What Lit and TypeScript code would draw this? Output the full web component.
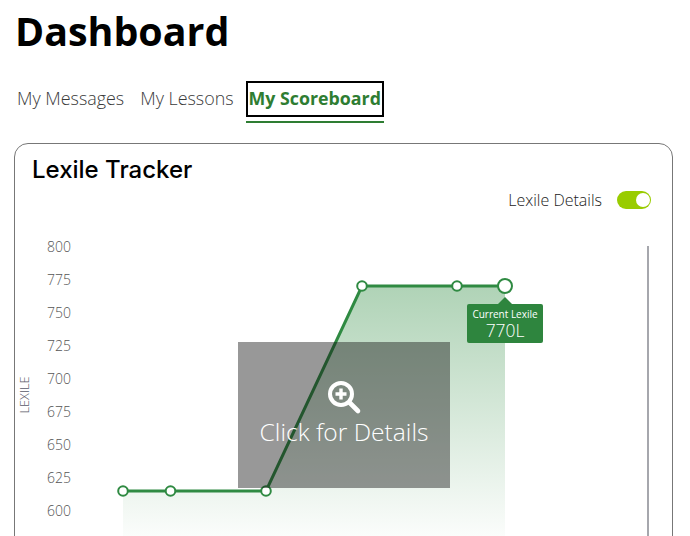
import { LitElement, html, css, svg } from "lit";
import { customElement } from "lit/decorators.js";

const LABELS = [800, 775, 750, 725, 700, 675, 650, 625, 600];
const POINTS: [number, number][] = [[123, 491], [170.5, 491], [266, 491], [362, 286], [457, 286]];

@customElement("app-root")
export class AppRoot extends LitElement {
  static styles = css`
    :host {
      display: block;
      height: 536px;
      overflow: hidden;
      background: #fff;
      font-family: "Open Sans", sans-serif;
    }
    h1 {
      margin: 0;
      padding: 4px 0 0 15px;
      font-size: 39.4px;
      line-height: 54px;
      font-weight: 700;
      color: #000;
    }
    .tabs {
      display: flex;
      align-items: flex-start;
      gap: 16px;
      margin: 23px 0 0 17px;
      height: 42px;
    }
    .tab {
      font-size: 17.9px;
      font-weight: 300;
      line-height: 34px;
      color: #3a3a3a;
    }
    .tabs .active {
      margin-left: -4px;
      padding-bottom: 4px;
      border-bottom: 2px solid #2e7d32;
    }
    .focus {
      display: block;
      border: 2px solid #000;
      padding: 0 1px;
      height: 32px;
      line-height: 30px;
      font-weight: 700;
      font-size: 17.8px;
      color: #2e7d32;
    }
    .card {
      margin: 20px 17px 0 14px;
      border: 1px solid #777;
      border-radius: 14px;
      height: 500px;
      position: relative;
    }
    h2 {
      margin: 0;
      padding: 9px 0 0 17px;
      font-family: Inter, sans-serif;
      font-size: 24px;
      line-height: 34px;
      font-weight: 500;
      color: #000;
    }
    .details {
      display: flex;
      justify-content: flex-end;
      align-items: center;
      gap: 15px;
      padding-right: 21px;
      margin-top: 3px;
      height: 20px;
      font-size: 16px;
      font-weight: 300;
      color: #222;
    }
    .toggle {
      width: 34px;
      height: 18px;
      border-radius: 9px;
      background: #99cc00;
      display: flex;
      justify-content: flex-end;
      align-items: center;
      padding-right: 1.5px;
      box-sizing: border-box;
    }
    .knob {
      width: 14px;
      height: 14px;
      border-radius: 50%;
      background: #fff;
    }
    .chart {
      position: relative;
      margin-top: 26px;
      height: 320px;
    }
    .chart svg.plot {
      display: block;
      width: 657px;
      height: 320px;
    }
    .axis {
      font-family: "Open Sans", sans-serif;
      font-size: 14px;
      font-weight: 300;
      fill: #555;
    }
    .axis-title {
      font-family: "Open Sans", sans-serif;
      font-size: 12.6px;
      font-weight: 300;
      fill: #5a5a6a;
    }
    .tooltip {
      position: absolute;
      left: 452px;
      top: 68px;
      width: 76px;
      height: 39px;
      background: #2e853e;
      border-radius: 2px;
      color: #fff;
      text-align: center;
    }
    .tooltip::before {
      content: "";
      position: absolute;
      left: 31px;
      top: -7px;
      border: 7px solid transparent;
      border-top: 0;
      border-bottom-color: #2e853e;
    }
    .tooltip .cap {
      font-size: 10px;
      line-height: 12px;
      padding-top: 4px;
    }
    .tooltip .val {
      font-size: 17.4px;
      line-height: 20px;
      font-weight: 300;
    }
    .overlay {
      position: absolute;
      left: 223px;
      top: 106px;
      width: 212px;
      height: 146px;
      background: rgba(20, 20, 20, 0.44);
      color: #fff;
      display: flex;
      flex-direction: column;
      align-items: center;
    }
    .overlay svg {
      margin-top: 38px;
      display: block;
    }
    .overlay span {
      font-size: 24.6px;
      font-weight: 300;
      line-height: 32px;
    }
  `;

  render() {
    const line = [...POINTS, [505, 286]].map((p) => p.join(",")).join(" ");
    const area = `${line} 505,536 123,536`;
    return html`
      <h1>Dashboard</h1>
      <div class="tabs">
        <div class="tab">My Messages</div>
        <div class="tab">My Lessons</div>
        <div class="tab active"><span class="focus">My Scoreboard</span></div>
      </div>
      <div class="card">
        <h2>Lexile Tracker</h2>
        <div class="details">
          <span>Lexile Details</span>
          <div class="toggle"><div class="knob"></div></div>
        </div>
        <div class="chart">
          <svg class="plot" viewBox="15 236 657 320">
            <defs>
              <linearGradient id="fill" gradientUnits="userSpaceOnUse" x1="0" y1="286" x2="0" y2="536">
                <stop offset="0" stop-color="#2e8b40" stop-opacity="0.38"></stop>
                <stop offset="1" stop-color="#2e8b40" stop-opacity="0.02"></stop>
              </linearGradient>
            </defs>
            ${LABELS.map(
              (v, i) => svg`<text class="axis" x="71" y=${252.2 + i * 33} text-anchor="end">${v}</text>`
            )}
            <text class="axis-title" transform="translate(29 395) rotate(-90)" text-anchor="middle">LEXILE</text>
            <line x1="648" y1="246" x2="648" y2="556" stroke="#a6a7ad" stroke-width="2"></line>
            <polygon points=${area} fill="url(#fill)"></polygon>
            <polyline points=${line} fill="none" stroke="#2f8a42" stroke-width="3"></polyline>
            ${POINTS.map(
              ([x, y]) => svg`<circle cx=${x} cy=${y} r="4.8" fill="#fff" stroke="#2f8a42" stroke-width="2"></circle>`
            )}
            <circle cx="505" cy="286" r="7" fill="#fff" stroke="#2f8a42" stroke-width="2"></circle>
          </svg>
          <div class="tooltip">
            <div class="cap">Current Lexile</div>
            <div class="val">770L</div>
          </div>
          <div class="overlay">
            <svg width="36" height="36" viewBox="0 0 36 36">
              <circle cx="15" cy="14" r="11" fill="none" stroke="#fff" stroke-width="4"></circle>
              <path d="M15 8.5v11M9.5 14h11" stroke="#fff" stroke-width="3.4" fill="none"></path>
              <path d="M23.5 22.5L32 31" stroke="#fff" stroke-width="4.6" stroke-linecap="round" fill="none"></path>
            </svg>
            <span>Click for Details</span>
          </div>
        </div>
      </div>
    `;
  }
}
